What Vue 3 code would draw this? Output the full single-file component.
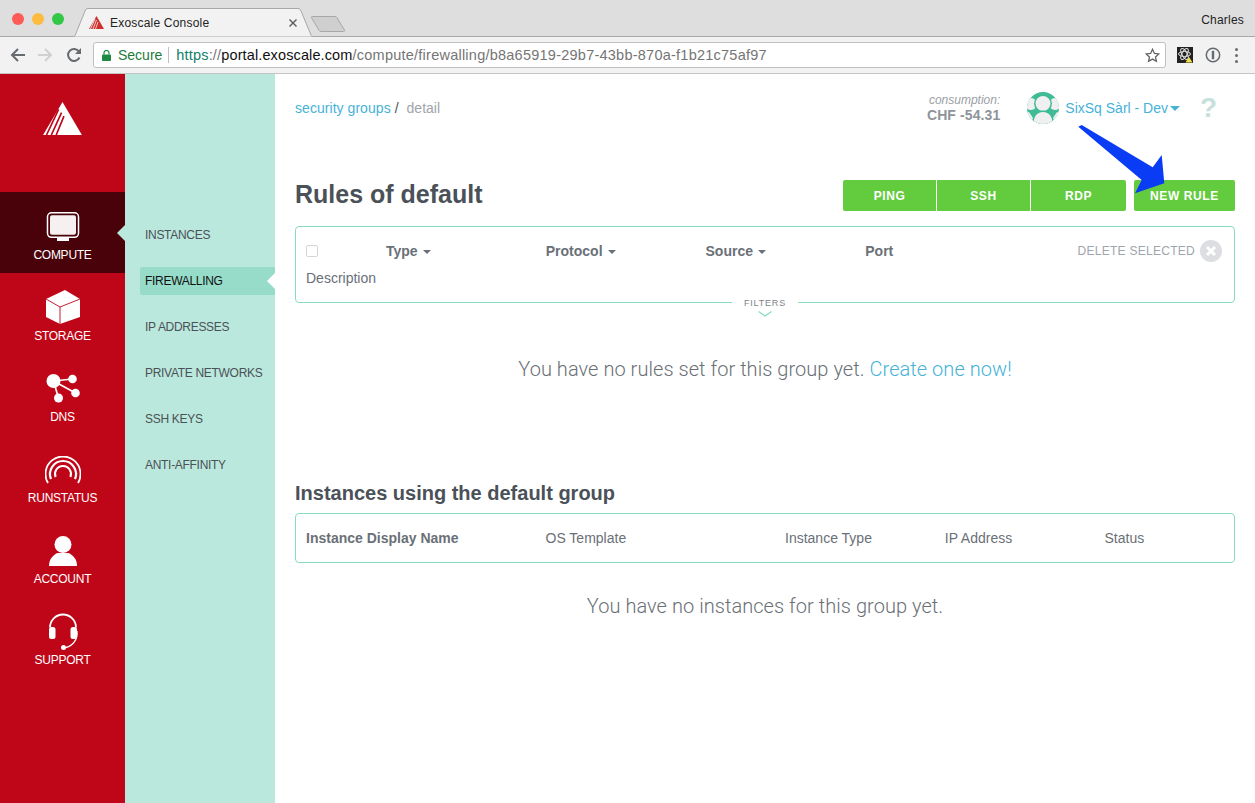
<script setup>
const sideItems = [
  { key: 'compute', label: 'COMPUTE', active: true },
  { key: 'storage', label: 'STORAGE' },
  { key: 'dns', label: 'DNS' },
  { key: 'runstatus', label: 'RUNSTATUS' },
  { key: 'account', label: 'ACCOUNT' },
  { key: 'support', label: 'SUPPORT' }
]

const subItems = [
  { label: 'INSTANCES' },
  { label: 'FIREWALLING', active: true },
  { label: 'IP ADDRESSES' },
  { label: 'PRIVATE NETWORKS' },
  { label: 'SSH KEYS' },
  { label: 'ANTI-AFFINITY' }
]

const ruleCols = ['Type', 'Protocol', 'Source']
const instanceCols = ['Instance Type', 'IP Address', 'Status']
</script>

<template>
  <div class="window">
    <!-- browser chrome -->
    <div class="tabstrip">
      <div class="lights">
        <span class="light red"></span>
        <span class="light yellow"></span>
        <span class="light green"></span>
      </div>
      <div class="tab">
        <svg class="tab-shape" width="244" height="29" viewBox="0 0 244 29">
          <path d="M0 28.5h1c1 0 1.800-.5 2.300-1.500L13 3c.6-1.500 1.500-2.500 3-2.500h210c1.500 0 2.400 1 3 2.500l10 24c.5 1 1.300 1.500 2.300 1.500h2.700" fill="#f2f2f2" stroke="#a8a8a8"/>
        </svg>
        <svg class="favicon" width="15" height="13" viewBox="0 0 15 13">
          <path d="M7.500 0L15 13H0z" fill="#d0312d"/>
          <path d="M6 3L1.500 13M7.500 4L4 13M9 6L6.500 13" stroke="#f2f2f2" stroke-width=".8" fill="none"/>
        </svg>
        <span class="tab-title">Exoscale Console</span>
        <svg class="tab-close" width="8" height="8" viewBox="0 0 8 8">
          <path d="M.5.5l7 7M7.500.5l-7 7" stroke="#5a5a5a" stroke-width="1.400"/>
        </svg>
      </div>
      <svg class="newtab" width="35" height="18" viewBox="0 0 35 18">
        <path d="M1 1.500h23c1 0 1.500.4 2 1.200l7.500 12.300c.4.900 0 1.500-1 1.500H10c-1 0-1.500-.4-2-1.200L.5 2.700C.2 2 .4 1.500 1 1.500z" fill="#cfcfcf" stroke="#a8a8a8"/>
      </svg>
      <span class="profile">Charles</span>
    </div>

    <div class="toolbar">
      <svg class="nav-icon" width="16" height="16" viewBox="0 0 16 16">
        <path d="M15 8H2M8 2L2 8l6 6" fill="none" stroke="#666b70" stroke-width="2"/>
      </svg>
      <svg class="nav-icon" width="16" height="16" viewBox="0 0 16 16">
        <path d="M1 8h13M8 2l6 6-6 6" fill="none" stroke="#d0d0d0" stroke-width="2"/>
      </svg>
      <svg class="nav-icon" width="16" height="16" viewBox="0 0 16 16">
        <path d="M13.500 10.500A6 6 0 1 1 13 4.500" fill="none" stroke="#666b70" stroke-width="2"/>
        <path d="M15 1v6H9z" fill="#666b70"/>
      </svg>
      <div class="omnibox">
        <svg class="lock" width="9" height="11" viewBox="0 0 9 11">
          <path d="M2 4.500V3a2.500 2.500 0 0 1 5 0v1.500" fill="none" stroke="#1e8a44" stroke-width="1.200"/>
          <rect x="0" y="4.500" width="9" height="6.500" rx=".8" fill="#1e8a44"/>
        </svg>
        <span class="secure">Secure</span>
        <span class="omni-sep"></span>
        <span class="url"><span class="url-scheme">https</span><span class="url-sep">://</span><span class="url-host">portal.exoscale.com</span><span class="url-rest">/compute/firewalling/b8a65919-29b7-43bb-870a-f1b21c75af97</span></span>
        <svg class="star" width="15" height="15" viewBox="0 0 15 15">
          <path d="M7.500 1.300l1.900 4.100 4.400.5-3.300 3 .9 4.400-3.900-2.200-3.900 2.200.9-4.400-3.300-3 4.400-.5z" fill="none" stroke="#5f6368" stroke-width="1.300"/>
        </svg>
      </div>
      <div class="ext-box">
        <svg width="16" height="16" viewBox="0 0 16 16">
          <rect width="16" height="16" fill="#222"/>
          <g fill="none" stroke="#ddd" stroke-width="1">
            <ellipse cx="7.500" cy="7" rx="6" ry="2.500"/>
            <ellipse cx="7.500" cy="7" rx="6" ry="2.500" transform="rotate(60 7.500 7)"/>
            <ellipse cx="7.500" cy="7" rx="6" ry="2.500" transform="rotate(120 7.500 7)"/>
          </g>
          <path d="M12 10l3.500 5.500h-7z" fill="#f5e04a"/>
        </svg>
      </div>
      <svg class="ext-pass" width="16" height="16" viewBox="0 0 16 16">
        <circle cx="8" cy="8" r="6.700" fill="none" stroke="#666b70" stroke-width="1.500"/>
        <rect x="6.800" y="3.800" width="2.400" height="8.400" fill="#666b70"/>
      </svg>
      <div class="menu-dots"><span></span><span></span><span></span></div>
    </div>

    <!-- app -->
    <div class="app">
      <aside class="sidebar">
        <div class="logo">
          <svg width="39" height="33" viewBox="0 0 40 34">
            <path d="M20 0L40 34H0z" fill="#fff"/>
            <path d="M16 7.500L3.500 34M19 11L8.500 34M21.500 14.500L13.500 34" stroke="#bf0618" stroke-width="1.700" fill="none"/>
          </svg>
        </div>
        <div v-for="item in sideItems" :key="item.key" class="side-item" :class="{ active: item.active }">
          <svg v-if="item.key === 'compute'" width="34" height="31" viewBox="0 0 34 31">
            <rect x="1.500" y=".8" width="31" height="24.500" rx="4" fill="none" stroke="#fff" stroke-width="1.500"/>
            <rect x="4" y="3.300" width="26" height="19.500" rx="2" fill="#f6f0f0"/>
            <rect x="11" y="26" width="12" height="3" fill="#fff"/>
          </svg>
          <svg v-else-if="item.key === 'storage'" width="34" height="34" viewBox="0 0 34 34">
            <path d="M19 0L34 9V27L14 34 0 27V9z" fill="#fff"/>
            <path d="M0 9L14 17 34 9M14 17V34" fill="none" stroke="#bf0618" stroke-width=".9"/>
          </svg>
          <svg v-else-if="item.key === 'dns'" width="34" height="31" viewBox="0 0 34 31">
            <path d="M7.500 7L26.500 5M7.500 7L29.500 19M7.500 7L12.500 24" stroke="#fff" stroke-width="1.700" fill="none"/>
            <circle cx="7.500" cy="7" r="7" fill="#fff"/>
            <circle cx="26.500" cy="5" r="4.300" fill="#fff"/>
            <circle cx="29.500" cy="19" r="4.300" fill="#fff"/>
            <circle cx="12.500" cy="24" r="4.500" fill="#fff"/>
          </svg>
          <svg v-else-if="item.key === 'runstatus'" width="36" height="30" viewBox="0 0 36 30">
            <g fill="none" stroke="#fff">
              <path d="M3 27A17.500 17.500 0 1 1 33 27" stroke-width="1.800"/>
              <path d="M6 23A13 13 0 1 1 30 23" stroke-width="2.200"/>
              <path d="M10.600 21A8 8 0 1 1 25.400 21" stroke-width="2"/>
            </g>
          </svg>
          <svg v-else-if="item.key === 'account'" width="30" height="31" viewBox="0 0 30 31">
            <circle cx="15" cy="8.500" r="8.500" fill="#fff"/>
            <path d="M1 30c0-7 4-11 8.500-13h11c4.500 2 8.500 6 8.500 13z" fill="#fff"/>
          </svg>
          <svg v-else class="icon-support" width="32" height="38" viewBox="0 0 32 38">
            <path d="M3 15.500A13 13 0 0 1 29 15.500" fill="none" stroke="#fff" stroke-width="1.800"/>
            <rect x="2" y="15" width="6.500" height="12" rx="2.500" fill="#fff"/>
            <rect x="23.500" y="15" width="6.500" height="12" rx="2.500" fill="#fff"/>
            <path d="M30 19c1 8-4 15-11 16.500" fill="none" stroke="#fff" stroke-width="1.300"/>
            <circle cx="16.500" cy="35.500" r="2.500" fill="#fff"/>
          </svg>
          <span class="side-label">{{ item.label }}</span>
        </div>
      </aside>

      <nav class="subnav">
        <div v-for="item in subItems" :key="item.label" class="sub-item" :class="{ active: item.active }">
          {{ item.label }}
        </div>
      </nav>

      <main class="content">
        <header class="topbar">
          <div class="crumbs"><a>security groups</a><span class="crumb-slash">/</span><span class="crumb-cur">detail</span></div>
          <div class="consumption">
            <em>consumption:</em>
            <strong>CHF -54.31</strong>
          </div>
          <svg class="avatar" width="32" height="32" viewBox="0 0 32 32">
            <clipPath id="avatar-clip"><circle cx="16" cy="16" r="16"/></clipPath>
            <g clip-path="url(#avatar-clip)">
              <rect width="32" height="32" fill="#3fbb96"/>
              <circle cx="4" cy="12" r="6" fill="#f0f0f0"/>
              <circle cx="28" cy="12" r="6" fill="#f0f0f0"/>
              <path d="M-4 32V22l6-2 4 6h20l4-6 6 2v10z" fill="#f0f0f0"/>
              <circle cx="16" cy="11.500" r="9" fill="#3fbb96"/>
              <circle cx="16" cy="11.500" r="7.500" fill="#f0f0f0"/>
              <path d="M5 32c0-8 4-13.500 11-13.500S27 24 27 32z" fill="#3fbb96"/>
              <path d="M6.500 32c0-7 3-12 9.500-12s9.500 5 9.500 12z" fill="#f0f0f0"/>
            </g>
          </svg>
          <div class="org">SixSq Sàrl - Dev<span class="org-caret"></span></div>
          <div class="help">?</div>
        </header>

        <div class="title-row">
          <h1>Rules of default</h1>
          <div class="btn-group">
            <button>PING</button>
            <button>SSH</button>
            <button>RDP</button>
          </div>
          <button class="btn-new">NEW RULE</button>
        </div>

        <div class="box rules">
          <div class="rules-row">
            <div class="col col-check"><span class="checkbox"></span></div>
            <div v-for="c in ruleCols" :key="c" class="col th">{{ c }}<span class="caret"></span></div>
            <div class="col th">Port</div>
            <div class="delete-sel">
              DELETE SELECTED
              <svg width="22" height="22" viewBox="0 0 22 22">
                <circle cx="11" cy="11" r="11" fill="#dcdee2"/>
                <path d="M7 7l8 8M15 7l-8 8" stroke="#fff" stroke-width="3"/>
              </svg>
            </div>
          </div>
          <div class="desc">Description</div>
          <div class="filters">
            <span>FILTERS</span>
            <svg width="14" height="6" viewBox="0 0 14 6">
              <path d="M.5.5L7 5 13.500.5" fill="none" stroke="#86dcc0" stroke-width="1.200"/>
            </svg>
          </div>
        </div>

        <p class="empty first">You have no rules set for this group yet. <a>Create one now!</a></p>

        <h2>Instances using the default group</h2>
        <div class="box instances">
          <div class="col th wide">Instance Display Name</div>
          <div class="col td wide">OS Template</div>
          <div v-for="c in instanceCols" :key="c" class="col td">{{ c }}</div>
        </div>
        <p class="empty second">You have no instances for this group yet.</p>
      </main>
    </div>

    <!-- annotation -->
    <svg class="arrow" width="88" height="70" viewBox="0 0 88 70">
      <path d="M.3 1.700L3.700 0 74.700 42.300 83.700 30 86.300 58.300 57 68.300 63.700 55z" fill="#0a3cf5"/>
    </svg>
  </div>
</template>

<style>
html, body { margin: 0; background: #fff; }
</style>

<style scoped>
.window {
  position: relative;
  width: 1255px;
  height: 803px;
  overflow: hidden;
  display: flex;
  flex-direction: column;
  font-family: "Liberation Sans", Arial, sans-serif;
  color: #4a5158;
}

.tabstrip {
  height: 36px;
  flex: none;
  display: flex;
  align-items: flex-start;
  background: #dedede;
  border-bottom: 1px solid #a8a8a8;
  box-sizing: content-box;
}
.lights {
  display: flex;
  gap: 8px;
  padding: 13px 0 0 12px;
  width: 60px;
}
.light { width: 12px; height: 12px; border-radius: 50%; }
.red { background: #fc5b57; }
.yellow { background: #fdbb40; }
.green { background: #33c748; }

.tab {
  position: relative;
  width: 244px;
  height: 29px;
  margin-top: 8px;
  display: flex;
  align-items: center;
  font-size: 12px;
  color: #222;
}
.tab-shape { position: absolute; left: 0; top: 0; }
.favicon { position: relative; margin-left: 17px; }
.tab-title { position: relative; margin-left: 6px; letter-spacing: .2px; white-space: nowrap; flex: 1; }
.tab-close { position: relative; margin-right: 19px; }
.newtab { margin: 15px 0 0 -5px; }
.profile { margin-left: auto; margin-right: 11px; margin-top: 13px; font-size: 12px; letter-spacing: .2px; color: #222; }

.toolbar {
  height: 36px;
  flex: none;
  display: flex;
  align-items: center;
  background: #f2f2f2;
  border-bottom: 1px solid #c4c4c4;
  box-sizing: content-box;
  padding-left: 10px;
}
.nav-icon { margin-right: 11px; }
.nav-icon:nth-child(2) { margin-right: 13px; }
.omnibox {
  width: 1073px;
  height: 26px;
  flex: none;
  box-sizing: border-box;
  display: flex;
  align-items: center;
  background: #fff;
  border: 1px solid #c0c0c0;
  border-radius: 3px;
  padding: 0 5px 0 8px;
  font-size: 14px;
}
.lock { margin-right: 7px; }
.secure { color: #1e7a3c; }
.omni-sep { width: 1px; height: 16px; background: #c0c0c0; margin: 0 7px 0 6px; }
.url { flex: 1; white-space: nowrap; font-size: 14.500px; letter-spacing: .17px; }
.url-scheme { color: #12806a; }
.url-sep { color: #757575; }
.url-rest { color: #757575; letter-spacing: .24px; }
.url-host { color: #111; letter-spacing: .12px; }
.ext-box { margin-left: 11px; display: flex; }
.ext-pass { margin-left: 12px; }
.menu-dots { margin-left: 14px; display: flex; flex-direction: column; gap: 3px; }
.menu-dots span { width: 3px; height: 3px; border-radius: 50%; background: #666b70; }

.app { flex: 1; display: flex; min-height: 0; }

.sidebar { width: 125px; flex: none; background: #bf0618; color: #fff; }
.logo { height: 118px; display: flex; justify-content: center; padding-top: 28px; box-sizing: border-box; }
.side-item {
  position: relative;
  height: 81px;
  display: flex;
  flex-direction: column;
  align-items: center;
  justify-content: flex-end;
  padding-bottom: 11px;
  box-sizing: border-box;
}
.side-item.active { background: #4a020a; }
.side-item.active::after {
  content: "";
  position: absolute;
  right: 0;
  top: 33px;
  border: 8px solid transparent;
  border-left-width: 0;
  border-right-color: #bbe8dc;
}
.side-label { font-size: 12px; letter-spacing: -.25px; margin-top: 5px; line-height: 14px; }
.icon-support { margin-bottom: -2px; }

.subnav {
  width: 150px;
  flex: none;
  background: #bbe8dc;
  padding: 147px 0 0 15px;
  box-sizing: border-box;
  display: flex;
  flex-direction: column;
  gap: 18px;
}
.sub-item {
  position: relative;
  height: 28px;
  line-height: 28px;
  padding-left: 5px;
  font-size: 12px;
  letter-spacing: -.3px;
  color: #4a5158;
  white-space: nowrap;
}
.sub-item.active { background: #96dcc8; color: #111; border-radius: 2px 0 0 2px; }
.sub-item.active::after {
  content: "";
  position: absolute;
  right: 0;
  top: 6px;
  border: 8px solid transparent;
  border-left-width: 0;
  border-right-color: #fff;
}

.content { flex: 1; padding: 0 20px; min-width: 0; }

.topbar { height: 68px; display: flex; align-items: center; padding-right: 19px; }
.crumbs { flex: 1; font-size: 14px; color: #a0a5ab; }
.crumbs a { color: #46b2d8; letter-spacing: .05px; }
.crumb-slash { color: #4a5158; margin: 0 8px 0 4px; }
.consumption { display: flex; flex-direction: column; align-items: flex-end; margin-right: 27px; padding-top: 2px; }
.consumption em { font-size: 12px; color: #9aa0a6; line-height: 13px; }
.consumption strong { font-size: 14px; letter-spacing: .1px; color: #8e949a; line-height: 17px; }
.avatar { margin-right: 6px; }
.org { font-size: 14px; color: #46b2d8; display: flex; align-items: center; }
.org-caret { border: 5px solid transparent; border-top: 5px solid #46b2d8; border-bottom: 0; margin-left: 2px; }
.help { font-size: 28px; font-weight: 700; color: #c8e0da; margin-left: 20px; width: 16px; }

.title-row { display: flex; align-items: flex-start; padding-top: 38px; }
h1 { flex: 1; margin: -1px 0 0; font-size: 25px; line-height: 31px; font-weight: 700; color: #4a5158; }
.btn-group { display: flex; width: 283px; margin-right: 8px; }
button {
  border: 0;
  background: #62cb3e;
  color: #fff;
  font: 700 12px "Liberation Sans", Arial, sans-serif;
  letter-spacing: .6px;
  height: 31px;
  padding: 0;
}
.btn-group button { width: 94px; border-left: 1px solid #fff; box-sizing: border-box; }
.btn-group button:first-child { width: 93px; border-left: 0; border-radius: 2px 0 0 2px; }
.btn-group button:last-child { width: 96px; border-radius: 0 2px 2px 0; }
.btn-new { width: 101px; border-radius: 2px; }

.box { border: 1px solid #86dcc0; border-radius: 4px; box-sizing: border-box; }
.rules { position: relative; height: 77px; margin-top: 15px; padding: 11px 10px 0; }
.rules-row { display: flex; align-items: center; height: 25px; }
.col { width: 159.750px; flex: none; font-size: 14px; box-sizing: border-box; }
.col-check { width: 80px; }
.checkbox { display: block; width: 12px; height: 12px; border: 1px solid #d4d6d8; border-radius: 2px; box-sizing: border-box; }
.th { font-weight: 700; color: #6a7078; }
.caret { display: inline-block; vertical-align: middle; border: 4px solid transparent; border-top: 4px solid #6a7078; border-bottom: 0; margin-left: 5px; }
.delete-sel {
  margin-left: auto;
  display: flex;
  align-items: center;
  gap: 5px;
  font-size: 12px;
  letter-spacing: .27px;
  color: #a0a5ab;
  margin-right: 2px;
  white-space: nowrap;
}
.desc { font-size: 14px; color: #6a7078; line-height: 20px; margin-top: 5px; }
.filters {
  position: absolute;
  left: 436px;
  top: 70px;
  width: 66px;
  background: #fff;
  display: flex;
  flex-direction: column;
  align-items: center;
  font-size: 9px;
  letter-spacing: .8px;
  color: #7d838a;
  line-height: 12px;
  gap: 2px;
}

.empty { margin: 0; text-align: center; font-family: Roboto, "Liberation Sans", sans-serif; font-weight: 300; font-size: 20px; letter-spacing: .05px; color: #6a7075; }
.empty a { color: #46b2d8; }
.first { margin-top: 54px; line-height: 24px; }

h2 { margin: 100px 0 0; font-size: 20px; line-height: 24px; font-weight: 700; color: #4a5158; }
.instances { margin-top: 8px; height: 50px; display: flex; align-items: center; padding: 0 10px; }
.td { color: #6a7078; font-weight: 400; }
.wide { width: 239.500px; }
.second { margin-top: 31px; line-height: 24px; }

.arrow { position: absolute; left: 1078px; top: 125px; }
</style>
